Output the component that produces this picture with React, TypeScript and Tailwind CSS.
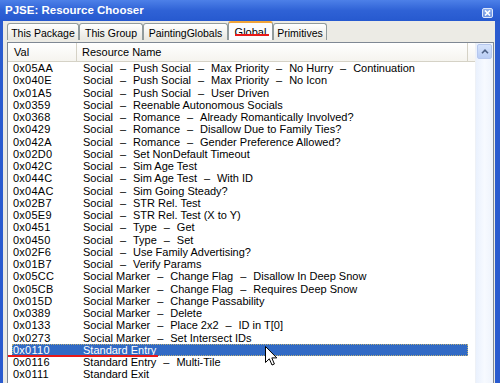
import React from "react";

const rows: [string, string][] = [
  ["0x05AA", "Social - Push Social - Max Priority - No Hurry - Continuation"],
  ["0x040E", "Social - Push Social - Max Priority - No Icon"],
  ["0x01A5", "Social - Push Social - User Driven"],
  ["0x0359", "Social - Reenable Autonomous Socials"],
  ["0x0368", "Social - Romance - Already Romantically Involved?"],
  ["0x0429", "Social - Romance - Disallow Due to Family Ties?"],
  ["0x042A", "Social - Romance - Gender Preference Allowed?"],
  ["0x02D0", "Social - Set NonDefault Timeout"],
  ["0x042C", "Social - Sim Age Test"],
  ["0x044C", "Social - Sim Age Test - With ID"],
  ["0x04AC", "Social - Sim Going Steady?"],
  ["0x02B7", "Social - STR Rel. Test"],
  ["0x05E9", "Social - STR Rel. Test (X to Y)"],
  ["0x0451", "Social - Type - Get"],
  ["0x0450", "Social - Type - Set"],
  ["0x02F6", "Social - Use Family Advertising?"],
  ["0x01B7", "Social - Verify Params"],
  ["0x05CC", "Social Marker - Change Flag - Disallow In Deep Snow"],
  ["0x05CB", "Social Marker - Change Flag - Requires Deep Snow"],
  ["0x015D", "Social Marker - Change Passability"],
  ["0x0389", "Social Marker - Delete"],
  ["0x0133", "Social Marker - Place 2x2 - ID in T[0]"],
  ["0x0273", "Social Marker - Set Intersect IDs"],
  ["0x0110", "Standard Entry"],
  ["0x0116", "Standard Entry - Multi-Tile"],
  ["0x0111", "Standard Exit"],
  ["0x0117", "Standard Exit - Multi-Tile"],
];

const tabs = [
  { label: "This Package", w: "w-[72px]" },
  { label: "This Group", w: "w-[64px]" },
  { label: "PaintingGlobals", w: "w-[85px]" },
  { label: "Global", w: "w-[45px]", active: true },
  { label: "Primitives", w: "w-[54px]" },
];

function Name({ text }: { text: string }) {
  const parts = text.split(" - ");
  return (
    <>
      {parts.map((p, i) => (
        <React.Fragment key={i}>
          {i > 0 && <span className="inline-block w-[20px] text-center">–</span>}
          {p}
        </React.Fragment>
      ))}
    </>
  );
}

export default function App() {
  return (
    <div
      className="relative w-[500px] h-[383px] overflow-hidden bg-[#2a5bcf] flex flex-col"
      style={{ fontFamily: '"Liberation Sans", Arial, sans-serif' }}
    >
      {/* Title bar */}
      <div className="h-[21px] shrink-0 flex items-center justify-between pl-[5px] pr-[7px] bg-gradient-to-b from-[#4d80e8] via-[#2f62d6] to-[#2659cf]">
        <span className="text-white font-bold text-[11.5px] leading-none pt-[1px]">
          PJSE: Resource Chooser
        </span>
        <div className="w-[11px] h-[10px] mt-[4px] rounded-[2px] border border-[#dfe8fb] bg-gradient-to-b from-[#8fb0ee] to-[#6d92e0] flex items-center justify-center">
          <svg width="7" height="6" viewBox="0 0 7 6">
            <path d="M1 0.5 L6 5.5 M6 0.5 L1 5.5" stroke="white" strokeWidth="1.6" />
          </svg>
        </div>
      </div>

      {/* Body */}
      <div className="flex-1 min-h-0 ml-[3px] mr-[5px] bg-[#ecebe5] flex flex-col pl-[4px] pr-[1px]">
        {/* Tabs */}
        <div className="h-[19px] shrink-0 flex items-end">
          {tabs.map((t) =>
            t.active ? (
              <div
                key={t.label}
                className={`${t.w} h-[19px] shrink-0 bg-[#fcfcfe] border-x border-[#919b9c] border-t-2 border-t-[#f0a43a] rounded-t-[3px] flex items-center justify-center text-[11px] leading-none text-black`}
              >
                <span className="relative top-[1px]">{t.label}</span>
              </div>
            ) : (
              <div
                key={t.label}
                className={`${t.w} h-[17px] shrink-0 bg-gradient-to-b from-[#ffffff] to-[#e8e7e0] border border-b-0 border-[#919b9c] rounded-t-[3px] flex items-center justify-center text-[10.5px] leading-none text-black`}
              >
                <span className="relative top-[1px]">{t.label}</span>
              </div>
            )
          )}
        </div>

        {/* List */}
        <div className="flex-1 min-h-0 mt-[2px] border border-b-0 border-[#7f8894] bg-white flex">
          <div className="flex-1 min-w-0 flex flex-col overflow-hidden">
            {/* Header */}
            <div className="h-[19px] shrink-0 flex border-b border-[#d5d2c6] bg-gradient-to-b from-white to-[#f5f4ef] text-[11px] leading-none text-black">
              <div className="w-[69px] shrink-0 flex items-center pl-[6px] border-r border-[#d5d2c6]">
                Val
              </div>
              <div className="w-[391px] shrink-0 flex items-center pl-[5px] border-r border-[#d5d2c6]">
                Resource Name
              </div>
            </div>
            {/* Rows */}
            <div className="flex flex-col">
              {rows.map(([v, n], i) => {
                const sel = v === "0x0110";
                return (
                  <div key={i} className="h-[12.25px] shrink-0 flex pl-[4px]">
                    <div
                      className={`w-[456px] flex text-[11px] leading-[12px] ${
                        sel
                          ? "bg-[#316ac5] text-white outline outline-1 -outline-offset-1 outline-dotted outline-[#b7ae7a]"
                          : "text-black"
                      }`}
                    >
                      <div className="w-[65px] shrink-0 pl-[1px] whitespace-nowrap tracking-[0.25px]">{v}</div>
                      <div className="pl-[6px] whitespace-nowrap">
                        <Name text={n} />
                      </div>
                    </div>
                  </div>
                );
              })}
            </div>
          </div>
          {/* Scrollbar */}
          <div className="w-[18px] shrink-0 bg-gradient-to-r from-[#eaf1fd] via-[#f7faff] to-[#eef3fc] border-l border-[#eef1f6] flex flex-col items-center pt-[1px]">
            <div className="w-[15px] h-[15px] rounded-[2px] border border-[#b5c7ee] bg-gradient-to-b from-[#d6e3fb] to-[#b9cdf4] flex items-center justify-center">
              <svg width="8" height="5" viewBox="0 0 8 5">
                <path d="M1 4.2 L4 1.2 L7 4.2" stroke="#4d6185" strokeWidth="1.6" fill="none" />
              </svg>
            </div>
          </div>
        </div>
      </div>

      {/* Annotations: red underlines */}
      <div className="absolute left-[235px] top-[34px] w-[34px] h-[2px] bg-[#e81818]" />
      <div className="absolute left-[8px] top-[355px] w-[150px] h-[2px] bg-[#e81818]" />

      {/* Mouse cursor */}
      <svg
        className="absolute left-[265px] top-[346px]"
        width="13"
        height="21"
        viewBox="0 0 13 21"
      >
        <path
          d="M0.5 0.5 L0.5 16.5 L4.3 12.8 L7 19 L9.4 18 L6.8 11.9 L11.8 11.9 Z"
          fill="white"
          stroke="black"
          strokeWidth="1"
          strokeLinejoin="round"
        />
      </svg>
    </div>
  );
}
